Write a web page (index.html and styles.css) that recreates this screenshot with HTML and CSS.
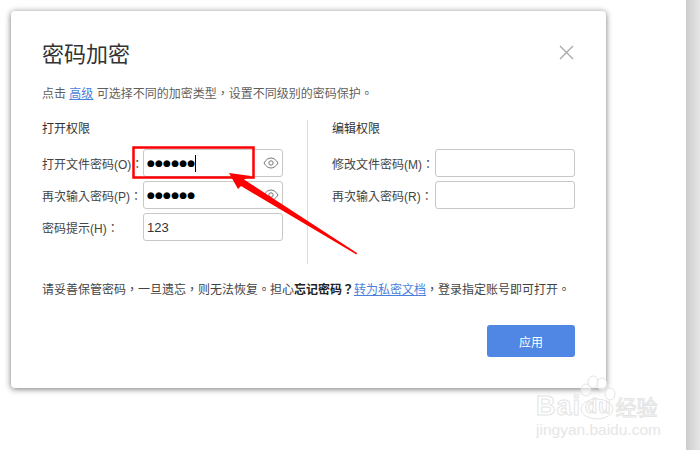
FILE: index.html
```html
<!DOCTYPE html>
<html lang="zh-CN">
<head>
  <meta charset="UTF-8">
  <title>密码加密</title>
  <link rel="stylesheet" href="styles.css">
</head>
<body>

  <div class="dialog">
    <div class="dialog-head">
      <h2>密码加密</h2>
      <svg class="close" width="15" height="15" viewBox="0 0 15 15"><path d="M1 1L14 14M14 1L1 14" stroke="#a8a8a8" stroke-width="1.3" fill="none"/></svg>
    </div>
    <p class="desc">点击 <a href="#">高级</a> 可选择不同的加密类型，设置不同级别的密码保护。</p>

    <div class="columns">
      <div class="col col-left">
        <h3>打开权限</h3>
        <div class="row">
          <label>打开文件密码(O)：</label>
          <div class="field"><span class="dots">●●●●●●</span><span class="caret"></span>
            <svg class="eye" width="16" height="12" viewBox="0 0 16 12"><path d="M1 6C3 2.6 5.3 1 8 1s5 1.600 7 5c-2 3.400-4.300 5-7 5S3 9.400 1 6z" stroke="#777" fill="none"/><circle cx="8" cy="6" r="2.200" stroke="#777" fill="none"/></svg>
          </div>
        </div>
        <div class="row">
          <label>再次输入密码(P)：</label>
          <div class="field"><span class="dots">●●●●●●</span>
            <svg class="eye" width="16" height="12" viewBox="0 0 16 12"><path d="M1 6C3 2.6 5.3 1 8 1s5 1.600 7 5c-2 3.400-4.300 5-7 5S3 9.400 1 6z" stroke="#777" fill="none"/><circle cx="8" cy="6" r="2.200" stroke="#777" fill="none"/></svg>
          </div>
        </div>
        <div class="row">
          <label>密码提示(H)：</label>
          <div class="field"><span class="plain">123</span></div>
        </div>
      </div>
      <div class="col col-right">
        <h3>编辑权限</h3>
        <div class="row">
          <label>修改文件密码(M)：</label>
          <div class="field"></div>
        </div>
        <div class="row">
          <label>再次输入密码(R)：</label>
          <div class="field"></div>
        </div>
      </div>
    </div>

    <p class="note">请妥善保管密码，一旦遗忘，则无法恢复。担心<b>忘记密码？</b><a href="#">转为私密文档</a>，登录指定账号即可打开。</p>

    <div class="actions">
      <button>应用</button>
    </div>
  </div>

  <div class="strip"></div>

  <!-- red annotation drawn over the screenshot -->
  <svg class="mark" width="700" height="450" viewBox="0 0 700 450">
    <rect x="133.500" y="147.500" width="120" height="30" fill="none" stroke="#f00" stroke-width="2.500"/>
    <path d="M229 173L251 176L244 179.500L357 253L356.500 254.500L241 186L238 189z" fill="#f00"/>
  </svg>

  <!-- baidu watermark -->
  <div class="watermark">
    <svg class="paw" width="54" height="48" viewBox="0 0 54 48">
      <g fill="#fff" fill-opacity="0.55" stroke="#e4e4e4">
        <ellipse cx="11" cy="15" rx="5" ry="6"/>
        <ellipse cx="18" cy="7" rx="5" ry="6"/>
        <ellipse cx="27" cy="9" rx="5" ry="6"/>
        <ellipse cx="35" cy="19" rx="5" ry="6"/>
        <ellipse cx="22" cy="34" rx="16" ry="10"/>
      </g>
    </svg>
    <div class="wm-logo"><span>Bai</span><span class="wm-du">du</span><span class="wm-cn">经验</span></div>
    <div class="wm-url">jingyan.baidu.com</div>
  </div>

</body>
</html>
```

FILE: styles.css
```css
* {
  box-sizing: border-box;
}
html, body {
  height: 100%;
}
body {
  margin: 0;
  background: #fff;
  display: flex;
  align-items: flex-start;
  overflow: hidden;
  font-family: "Liberation Sans", "Noto Sans CJK TC", sans-serif;
  font-feature-settings: "locl" 0;
  font-size: 12px;
  color: #444;
}
a {
  color: #4a7fdc;
}
.dialog {
  width: 595px;
  height: 377px;
  margin: 11px 0 0 11px;
  padding: 0 31px;
  background: #fff;
  border-radius: 4px;
  box-shadow: 0 1px 6px rgba(0,0,0,0.55);
}
.dialog-head {
  display: flex;
  justify-content: space-between;
  align-items: center;
  height: 28px;
  margin-top: 27px;
}
.dialog-head h2 {
  margin: 0;
  font-size: 22px;
  font-weight: normal;
  color: #333;
}
.close {
  margin-right: 1px;
}
.desc {
  margin: 19px 0 0;
  line-height: 18px;
  color: #5f5f5f;
}
.columns {
  display: flex;
  margin-top: 17px;
  height: 144px;
}
.col-left {
  width: 266px;
  border-right: 1px solid #ddd;
}
.col-right {
  padding-left: 24px;
}
.col h3 {
  margin: 0 0 11px;
  font-size: 12px;
  line-height: 18px;
  font-weight: normal;
  color: #333;
}
.row {
  display: flex;
  align-items: center;
  margin-bottom: 4px;
}
.row label {
  width: 101px;
  flex: none;
  white-space: nowrap;
  color: #444;
}
.col-right .row label {
  width: 103px;
}
.field {
  width: 140px;
  height: 28px;
  display: flex;
  align-items: center;
  padding: 0 3px 0 3px;
  border: 1px solid #c8c8c8;
  border-radius: 3px;
}
.dots {
  font-family: "DejaVu Sans", sans-serif;
  font-size: 9px;
  letter-spacing: 0.200px;
  color: #000;
}
.plain {
  font-size: 13px;
  color: #333;
}
.caret {
  width: 1px;
  height: 17px;
  background: #000;
}
.eye {
  margin-left: auto;
  flex: none;
}
.note {
  margin: 17px 0 0;
  line-height: 18px;
  color: #444;
  white-space: nowrap;
}
.note b {
  color: #222;
}
.actions {
  display: flex;
  justify-content: flex-end;
  margin-top: 26px;
}
.actions button {
  width: 88px;
  height: 32px;
  border: none;
  border-radius: 3px;
  background: #5087e5;
  color: #fff;
  font-family: inherit;
  font-size: 12px;
}
.strip {
  width: 14px;
  height: 100%;
  margin-left: auto;
  background: linear-gradient(to right, #cdcdcd, #e6e6e6);
}
.mark {
  position: absolute;
  left: 0;
  top: 0;
}
.watermark {
  position: absolute;
  left: 536px;
  top: 373px;
  width: 140px;
  height: 62px;
  padding-top: 20px;
}
.paw {
  position: absolute;
  left: 39px;
  top: 2px;
}
.wm-logo {
  position: relative;
  display: flex;
  align-items: center;
  height: 26px;
  color: rgba(255,255,255,0.4);
  -webkit-text-stroke: 1px #e4e4e4;
  font-size: 27px;
  font-weight: bold;
  letter-spacing: 1px;
}
.wm-du {
  margin-left: 4px;
  font-size: 20px;
}
.wm-cn {
  margin-left: 4px;
  font-size: 21px;
  letter-spacing: 0;
  font-weight: normal;
}
.wm-url {
  margin-top: 2px;
  font-size: 15.500px;
  color: #e6e6e6;
}
```
